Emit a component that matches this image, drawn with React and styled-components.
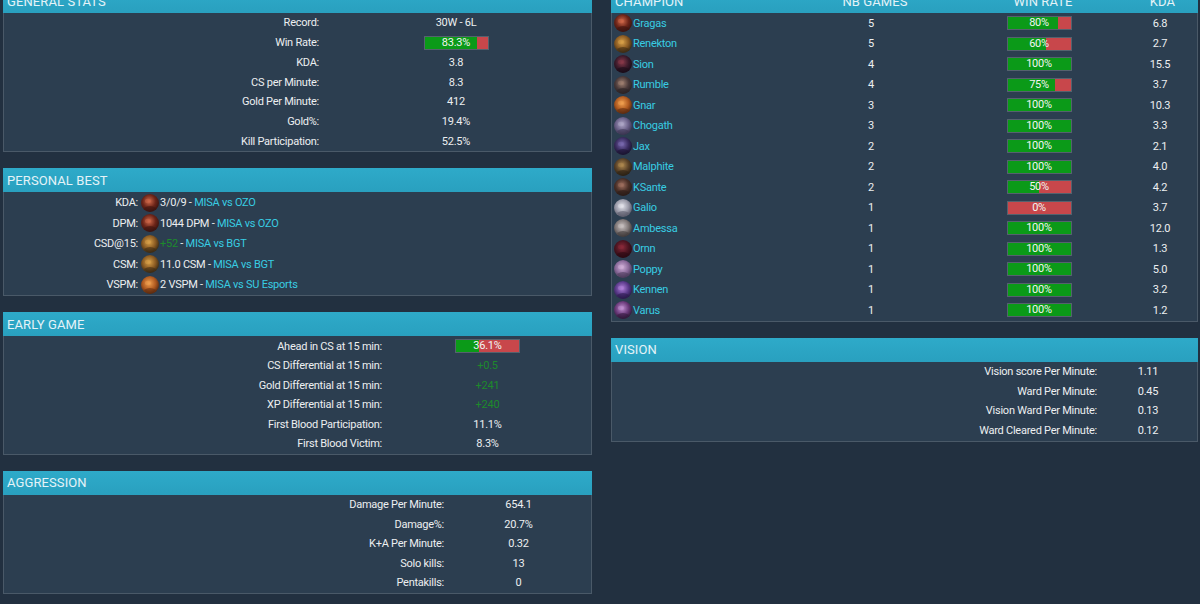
import React from 'react';
import styled, { createGlobalStyle } from 'styled-components';

const Global = createGlobalStyle`
  html, body { margin: 0; padding: 0; background: #223040; }
  body {
    font-family: Roboto, "Liberation Sans", Arial, sans-serif;
    font-size: 11px;
    letter-spacing: -0.25px;
    color: #eceff1;
    overflow: hidden;
  }
`;

const Page = styled.div`
  display: grid;
  grid-template-columns: 589px 587px;
  column-gap: 19px;
  align-items: start;
  padding: 0 2px 0 3px;
  margin-top: -11px;
  height: 640px;
  background: #223040;
`;

const Column = styled.div`
  display: flex;
  flex-direction: column;
  gap: 16px;
`;

const Panel = styled.section`
  display: flex;
  flex-direction: column;
`;

const Header = styled.div`
  height: 24px;
  box-sizing: border-box;
  padding-left: 4px;
  display: ${p => (p.$grid ? 'grid' : 'flex')};
  grid-template-columns: 176px 168px 168px 1fr;
  align-items: center;
  background: linear-gradient(#2eaac9, #29a0bf);
  color: #e4f3f8;
  font-size: 13px;
  letter-spacing: 0.1px;
  text-transform: uppercase;
  white-space: nowrap;
`;

const HeadCell = styled.span`
  text-align: ${p => (p.$left ? 'left' : 'center')};
`;

const Body = styled.div`
  background: #2c3e50;
  border: 1px solid #4a5968;
  border-top: none;
`;

const StatRow = styled.div`
  display: grid;
  grid-template-columns: ${p => p.$label}px 1fr;
  height: ${p => p.$h}px;
  align-items: center;
`;

const Label = styled.div`
  text-align: right;
  padding-right: 2px;
  white-space: nowrap;
`;

const Value = styled.div`
  display: flex;
  justify-content: ${p => (p.$left ? 'flex-start' : 'center')};
  align-items: center;
  padding-left: ${p => (p.$left ? '1px' : '0')};
  white-space: nowrap;
  color: ${p => (p.$green ? '#1d8a2c' : '#eceff1')};
`;

const Link = styled.span`
  color: #38cde3;
`;

const Good = styled.span`
  color: #1d8a2c;
`;

const Bar = styled.div`
  width: 65px;
  height: 14px;
  box-sizing: border-box;
  border: 1px solid #55626e;
  background: linear-gradient(90deg, #0b9a18 ${p => p.$pct}%, #c8474b ${p => p.$pct}%);
  color: #f2f5f2;
  text-align: center;
  line-height: 12px;
  font-size: 11px;
`;

const IconSvg = styled.svg`
  width: 18px;
  height: 18px;
  flex: none;
  margin-right: ${p => p.$gap || 2}px;
`;

const ChampRow = styled.div`
  display: grid;
  grid-template-columns: 175px 168px 168px 1fr;
  height: 20.5px;
  align-items: center;
`;

const ChampName = styled.div`
  display: flex;
  align-items: center;
  padding-left: 2px;
  color: #38cde3;
`;

const Cell = styled.div`
  display: flex;
  justify-content: center;
`;

const ICONS = {
  Gragas: ['#d0694a', '#6b2418', '#3a1410'],
  Renekton: ['#d9a24a', '#8a5a22', '#3a2a14'],
  Sion: ['#8a3a4a', '#3a1a2a', '#1a0c18'],
  Rumble: ['#a08070', '#4a3a3a', '#2a2224'],
  Gnar: ['#f0a050', '#b05a20', '#5a2a10'],
  Chogath: ['#b0a8c8', '#6a6088', '#3a3450'],
  Jax: ['#7a6ab0', '#3a2c60', '#1a1430'],
  Malphite: ['#b08a50', '#5a4228', '#2a2014'],
  KSante: ['#a07060', '#4a3028', '#2a1c18'],
  Galio: ['#e4e4ec', '#9a9aa8', '#5a5a6a'],
  Ambessa: ['#c8c0c0', '#807878', '#403a3a'],
  Ornn: ['#8a2a3a', '#4a1420', '#2a0a12'],
  Poppy: ['#d0b0d8', '#8a6a9a', '#4a3a5a'],
  Kennen: ['#b080d8', '#5a3a8a', '#2a1a4a'],
  Varus: ['#c090d0', '#6a3a7a', '#301838'],
};

function ChampIcon({ name, gap }) {
  const [a, b, c] = ICONS[name];
  const id = `g-${name}-${gap || 2}`;
  return (
    <IconSvg viewBox="0 0 18 18" $gap={gap}>
      <defs>
        <radialGradient id={id} cx="45%" cy="40%" r="60%">
          <stop offset="0%" stopColor={a} />
          <stop offset="60%" stopColor={b} />
          <stop offset="100%" stopColor={c} />
        </radialGradient>
      </defs>
      <circle cx="9" cy="9" r="9" fill={`url(#${id})`} />
      <ellipse cx="7" cy="7" rx="3" ry="2.2" fill={a} opacity="0.45" />
      <path d="M3 14 Q9 10 15 14 Q12 17.5 9 17.5 Q5.5 17.5 3 14Z" fill={c} opacity="0.55" />
    </IconSvg>
  );
}

const general = [
  ['Record:', '30W - 6L'],
  ['Win Rate:', { bar: 83.3, text: '83.3%' }],
  ['KDA:', '3.8'],
  ['CS per Minute:', '8.3'],
  ['Gold Per Minute:', '412'],
  ['Gold%:', '19.4%'],
  ['Kill Participation:', '52.5%'],
];

const early = [
  ['Ahead in CS at 15 min:', { bar: 36.1, text: '36.1%' }],
  ['CS Differential at 15 min:', '+0.5', true],
  ['Gold Differential at 15 min:', '+241', true],
  ['XP Differential at 15 min:', '+240', true],
  ['First Blood Participation:', '11.1%'],
  ['First Blood Victim:', '8.3%'],
];

const aggression = [
  ['Damage Per Minute:', '654.1'],
  ['Damage%:', '20.7%'],
  ['K+A Per Minute:', '0.32'],
  ['Solo kills:', '13'],
  ['Pentakills:', '0'],
];

const vision = [
  ['Vision score Per Minute:', '1.11'],
  ['Ward Per Minute:', '0.45'],
  ['Vision Ward Per Minute:', '0.13'],
  ['Ward Cleared Per Minute:', '0.12'],
];

const best = [
  ['KDA:', 'Gragas', '3/0/9', 'MISA vs OZO'],
  ['DPM:', 'Gragas', '1044 DPM', 'MISA vs OZO'],
  ['CSD@15:', 'Renekton', '+52', 'MISA vs BGT', true],
  ['CSM:', 'Renekton', '11.0 CSM', 'MISA vs BGT'],
  ['VSPM:', 'Gnar', '2 VSPM', 'MISA vs SU Esports'],
];

const champs = [
  ['Gragas', 5, 80, '6.8'],
  ['Renekton', 5, 60, '2.7'],
  ['Sion', 4, 100, '15.5'],
  ['Rumble', 4, 75, '3.7'],
  ['Gnar', 3, 100, '10.3'],
  ['Chogath', 3, 100, '3.3'],
  ['Jax', 2, 100, '2.1'],
  ['Malphite', 2, 100, '4.0'],
  ['KSante', 2, 50, '4.2'],
  ['Galio', 1, 0, '3.7'],
  ['Ambessa', 1, 100, '12.0'],
  ['Ornn', 1, 100, '1.3'],
  ['Poppy', 1, 100, '5.0'],
  ['Kennen', 1, 100, '3.2'],
  ['Varus', 1, 100, '1.2'],
];

function StatPanel({ title, rows, label, h }) {
  return (
    <Panel>
      <Header>{title}</Header>
      <Body>
        {rows.map(([l, v, green]) => (
          <StatRow key={l} $label={label} $h={h}>
            <Label>{l}</Label>
            <Value $green={green}>
              {typeof v === 'object' ? <Bar $pct={v.bar}>{v.text}</Bar> : v}
            </Value>
          </StatRow>
        ))}
      </Body>
    </Panel>
  );
}

export default function App() {
  return (
    <>
      <Global />
      <Page>
        <Column>
          <StatPanel title="General Stats" rows={general} label={317} h={19.75} />
          <Panel>
            <Header>Personal Best</Header>
            <Body>
              {best.map(([l, champ, stat, match, good]) => (
                <StatRow key={l} $label={136} $h={20.6}>
                  <Label>{l}</Label>
                  <Value $left>
                    <ChampIcon name={champ} gap={1} />
                    {good ? <Good>{stat}</Good> : stat}
                    &nbsp;-&nbsp;<Link>{match}</Link>
                  </Value>
                </StatRow>
              ))}
            </Body>
          </Panel>
          <StatPanel title="Early Game" rows={early} label={380} h={19.6} />
          <StatPanel title="Aggression" rows={aggression} label={442} h={19.6} />
        </Column>
        <Column>
          <Panel>
            <Header $grid>
              <HeadCell $left>Champion</HeadCell>
              <HeadCell>NB Games</HeadCell>
              <HeadCell>Win Rate</HeadCell>
              <HeadCell>KDA</HeadCell>
            </Header>
            <Body>
              {champs.map(([name, games, wr, kda]) => (
                <ChampRow key={name}>
                  <ChampName>
                    <ChampIcon name={name} gap={1} />
                    {name}
                  </ChampName>
                  <Cell>{games}</Cell>
                  <Cell>
                    <Bar $pct={wr}>{wr}%</Bar>
                  </Cell>
                  <Cell>{kda}</Cell>
                </ChampRow>
              ))}
            </Body>
          </Panel>
          <StatPanel title="Vision" rows={vision} label={487} h={19.75} />
        </Column>
      </Page>
    </>
  );
}
